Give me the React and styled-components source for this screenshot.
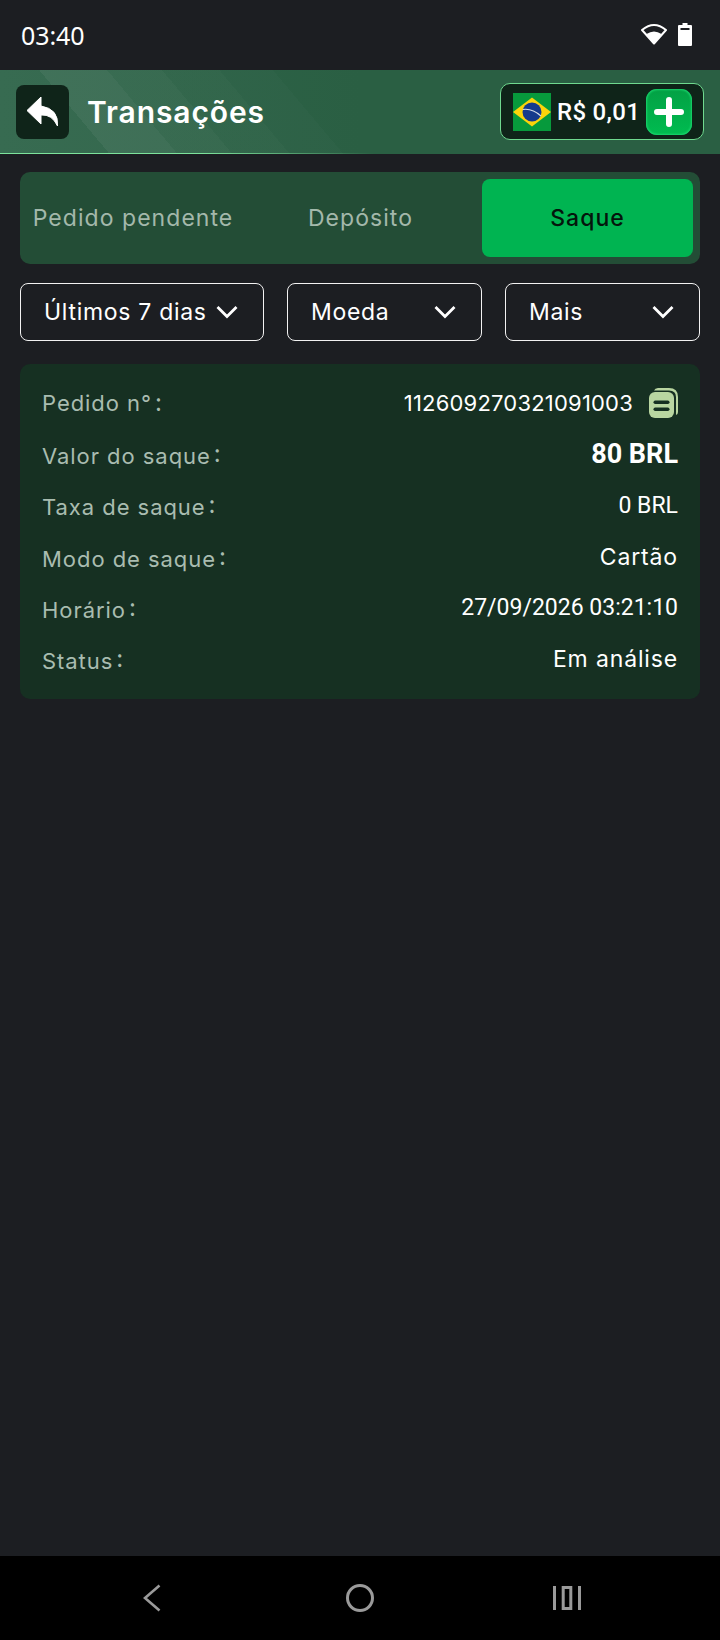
import styled, { createGlobalStyle } from 'styled-components'

const GlobalStyle = createGlobalStyle`
  html, body {
    margin: 0;
    padding: 0;
    background: #1c1e22;
  }
  * {
    box-sizing: border-box;
  }
`

const Page = styled.div`
  width: 720px;
  height: 1640px;
  display: flex;
  flex-direction: column;
  background: #1c1e22;
  color: #fff;
  font-family: Inter, sans-serif;
`

const StatusBar = styled.div`
  height: 70px;
  padding: 0 28px 0 21px;
  display: flex;
  align-items: center;
  justify-content: space-between;
  font-family: 'Noto Sans', sans-serif;
  font-size: 25px;
  letter-spacing: -0.1px;
`

const StatusIcons = styled.div`
  display: flex;
  align-items: center;
  gap: 11px;
  margin-bottom: 2px;
`

const Header = styled.header`
  height: 84px;
  padding: 0 16px 1px;
  display: flex;
  align-items: center;
  justify-content: space-between;
  background:
    linear-gradient(90deg, #7de39c 0 28%, transparent 52%) bottom / 100% 1px no-repeat,
    linear-gradient(50deg, rgba(255, 255, 255, 0.04) 0 84px, rgba(255, 255, 255, 0.085) 84px 136px, rgba(255, 255, 255, 0.055) 136px 178px, rgba(255, 255, 255, 0.03) 178px 222px, rgba(255, 255, 255, 0.015) 222px 263px, transparent 263px),
    linear-gradient(90deg, #2f654a 0%, #2a5f43 50%);
`

const HeaderLeft = styled.div`
  display: flex;
  align-items: center;
  gap: 18px;
`

const BackButton = styled.div`
  width: 53px;
  height: 54px;
  border-radius: 8px;
  background: #0f2419;
  display: flex;
  align-items: center;
  justify-content: center;
`

const Title = styled.h1`
  margin: 0;
  font-size: 30px;
  font-weight: 600;
  letter-spacing: 0.9px;
`

const Wallet = styled.div`
  width: 204px;
  height: 57px;
  padding: 0 11px 0 12px;
  display: flex;
  align-items: center;
  border: 1px solid #6fd98f;
  border-radius: 10px;
  background: #0f2419;
`

const Balance = styled.span`
  margin-left: 6px;
  flex: 1;
  font-family: Roboto, sans-serif;
  font-size: 24px;
  font-weight: 500;
  letter-spacing: 0.3px;
  white-space: nowrap;
`

const PlusButton = styled.div`
  width: 46px;
  height: 46px;
  border-radius: 11px;
  background: linear-gradient(180deg, #03a044, #00bc50);
  box-shadow: inset 0 0 2px 1px #1ad56d;
  display: flex;
  align-items: center;
  justify-content: center;
`

const Content = styled.main`
  flex: 1;
  padding: 18px 20px 0;
  display: flex;
  flex-direction: column;
`

const Tabs = styled.div`
  height: 92px;
  padding: 7px;
  display: grid;
  grid-template-columns: 212px 243px 211px;
  border-radius: 10px;
  background: #234d36;
`

const Tab = styled.div`
  display: flex;
  align-items: center;
  justify-content: center;
  border-radius: 8px;
  font-size: 23px;
  white-space: nowrap;
  letter-spacing: ${(p) => (p.$active ? '1px' : '1.05px')};
  font-weight: ${(p) => (p.$active ? 500 : 400)};
  color: ${(p) => (p.$active ? '#04150c' : '#a3b8ab')};
  background: ${(p) => (p.$active ? '#00b451' : 'transparent')};
`

const Filters = styled.div`
  margin-top: 19px;
  display: grid;
  grid-template-columns: 244px 195px 195px;
  justify-content: space-between;
`

const Filter = styled.div`
  height: 58px;
  padding: 0 25px 0 23px;
  display: flex;
  align-items: center;
  justify-content: space-between;
  border: 1px solid #f2f2f2;
  border-radius: 8px;
  font-size: 23px;
  letter-spacing: 0.7px;
  white-space: nowrap;
`

const Card = styled.section`
  margin-top: 23px;
  height: 335px;
  padding: 13px 22px 14px;
  display: flex;
  flex-direction: column;
  justify-content: space-between;
  border-radius: 10px;
  background: #163022;
`

const Row = styled.div`
  height: 52px;
  display: flex;
  align-items: center;
  justify-content: space-between;
`

const Label = styled.span`
  font-size: 22px;
  letter-spacing: 0.95px;
  color: #a9bcb0;
`

const Colon = styled.span`
  margin-left: 3px;
  font-size: 24px;
  vertical-align: ${(p) => (p.$raised ? '2px' : '0')};
`

const Value = styled.span`
  display: flex;
  align-items: center;
  gap: 16px;
  white-space: nowrap;
  font-family: ${(p) => (p.$num ? 'Roboto, sans-serif' : 'Inter, sans-serif')};
  font-size: ${(p) => (p.$big ? '27px' : p.$tight ? '22px' : '23px')};
  font-weight: ${(p) => (p.$big ? 700 : 400)};
  letter-spacing: ${(p) => (p.$num ? '0' : p.$tight ? '0.2px' : '0.85px')};
`

const NavBar = styled.nav`
  height: 84px;
  padding: 0 139px 0 143px;
  display: flex;
  align-items: center;
  justify-content: space-between;
  background: #000;
`

const Chevron = () => (
  <svg width="22" height="14" viewBox="0 0 22 14" fill="none">
    <path d="M1.5 2 L11 11.5 L20.5 2" stroke="#fff" strokeWidth="2.8" />
  </svg>
)

const Flag = () => (
  <svg width="38" height="38" viewBox="0 0 38 38">
    <rect width="38" height="38" fill="#079a3c" />
    <path d="M0 19 L19 4.5 L38 19 L19 33.5 Z" fill="#fbd40a" />
    <circle cx="19" cy="19" r="9.5" fill="#143a8c" />
    <path d="M9.8 16.5 Q19 15 28 23" stroke="#d5dde8" strokeWidth="1.1" fill="none" />
  </svg>
)

const CopyIcon = () => (
  <svg width="29" height="30" viewBox="0 0 29 30">
    <path d="M9 0 H20 Q29 0 29 9 V24 Q29 26.5 27 27 V9 Q27 2.5 20 2.5 H5 Q6 0 9 0 Z" fill="#b9d6a1" />
    <rect x="0" y="4" width="25" height="26" rx="6" fill="#b9d6a1" />
    <rect x="4.5" y="12.5" width="16" height="3.4" rx="1.7" fill="#163022" />
    <rect x="4.5" y="19.5" width="16" height="3.4" rx="1.7" fill="#163022" />
  </svg>
)

const rows = [
  { label: 'Pedido n°', value: '112609270321091003', copy: true, tight: true },
  { label: 'Valor do saque', value: '80 BRL', num: true, big: true, raised: true },
  { label: 'Taxa de saque', value: '0 BRL', num: true, raised: true },
  { label: 'Modo de saque', value: 'Cartão', raised: true },
  { label: 'Horário', value: '27/09/2026 03:21:10', num: true, raised: true },
  { label: 'Status', value: 'Em análise', raised: true },
]

export default function App() {
  return (
    <Page>
      <GlobalStyle />
      <StatusBar>
        <span>03:40</span>
        <StatusIcons>
          <svg width="26" height="22" viewBox="0 0 26 22">
            <path d="M13 20.5 L1 7 Q13 -3 25 7 Z" fill="none" stroke="#fff" strokeWidth="2" strokeLinejoin="round" />
            <path d="M13 21 L5.5 11 Q13 6 20.5 11 Z" fill="#fff" />
          </svg>
          <svg width="14" height="23" viewBox="0 0 14 23">
            <path d="M4.5 0 H9.5 V2 H13 Q14 2 14 3 V22 Q14 23 13 23 H1 Q0 23 0 22 V3 Q0 2 1 2 H4.5 Z" fill="#fff" />
            <rect x="2.5" y="5" width="9" height="2" fill="#1c1e22" />
          </svg>
        </StatusIcons>
      </StatusBar>
      <Header>
        <HeaderLeft>
          <BackButton>
            <svg width="32" height="30" viewBox="0 0 32 30">
              <path d="M14 0 L0 13.5 L14 27 V18 Q25 17 30.5 29 Q32 12 14 9 Z" fill="#fff" strokeLinejoin="round" stroke="#fff" strokeWidth="1" />
            </svg>
          </BackButton>
          <Title>Transações</Title>
        </HeaderLeft>
        <Wallet>
          <Flag />
          <Balance>R$ 0,01</Balance>
          <PlusButton>
            <svg width="30" height="30" viewBox="0 0 30 30">
              <path d="M15 3 V27 M3 15 H27" stroke="#fff" strokeWidth="6" strokeLinecap="round" />
            </svg>
          </PlusButton>
        </Wallet>
      </Header>
      <Content>
        <Tabs>
          <Tab>Pedido pendente</Tab>
          <Tab>Depósito</Tab>
          <Tab $active>Saque</Tab>
        </Tabs>
        <Filters>
          <Filter>Últimos 7 dias <Chevron /></Filter>
          <Filter>Moeda <Chevron /></Filter>
          <Filter>Mais <Chevron /></Filter>
        </Filters>
        <Card>
          {rows.map((r) => (
            <Row key={r.label}>
              <Label>
                {r.label}
                <Colon $raised={r.raised}>:</Colon>
              </Label>
              <Value $num={r.num} $big={r.big} $tight={r.tight}>
                {r.value}
                {r.copy && <CopyIcon />}
              </Value>
            </Row>
          ))}
        </Card>
      </Content>
      <NavBar>
        <svg width="24" height="28" viewBox="0 0 24 28" fill="none">
          <path d="M16.5 1.5 L2 14 L16.5 26.5" stroke="#9a9a9a" strokeWidth="2.6" />
        </svg>
        <svg width="28" height="28" viewBox="0 0 28 28" fill="none">
          <circle cx="14" cy="14" r="12.5" stroke="#9a9a9a" strokeWidth="3" />
        </svg>
        <svg width="28" height="24" viewBox="0 0 28 24" fill="none">
          <path d="M1.5 0 V24 M26.5 0 V24" stroke="#9a9a9a" strokeWidth="3" />
          <rect x="10.2" y="1.5" width="7.6" height="21" stroke="#9a9a9a" strokeWidth="3" />
        </svg>
      </NavBar>
    </Page>
  )
}
